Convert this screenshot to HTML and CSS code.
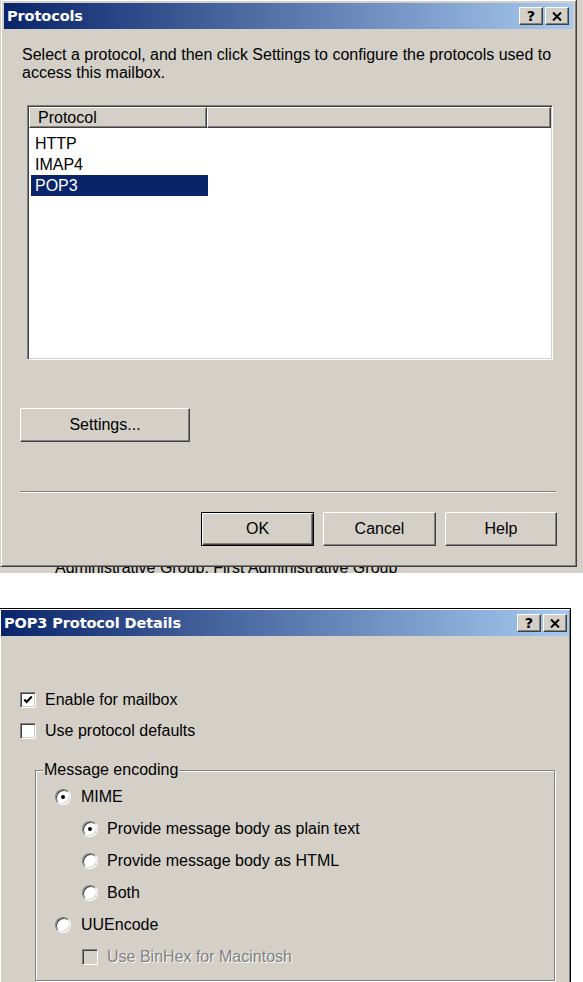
FILE: index.html
```html
<!DOCTYPE html>
<html>
<head>
<meta charset="utf-8">
<title>Protocols</title>
<link rel="stylesheet" href="styles.css">
</head>
<body>
<div class="backdrop">
  <div class="dialog dialog-main">
    <div class="titlebar">
      <span class="title">Protocols</span>
      <div class="tbtns">
        <span class="tbtn">?</span>
        <span class="tbtn"><svg width="10" height="9" viewBox="0 0 10 9"><path d="M1 0.5 L9 8.5 M9 0.5 L1 8.5" stroke="#000" stroke-width="2" fill="none"/></svg></span>
      </div>
    </div>
    <div class="body-main">
      <p class="intro">Select a protocol, and then click Settings to configure the protocols used to<br>access this mailbox.</p>
      <div class="listbox">
        <div class="lv-header">
          <div class="lv-col lv-col1">Protocol</div>
          <div class="lv-col lv-col2"></div>
        </div>
        <div class="lv-rows">
          <div class="lv-row">HTTP</div>
          <div class="lv-row">IMAP4</div>
          <div class="lv-row lv-sel">POP3</div>
        </div>
      </div>
      <div class="btn btn-settings">Settings...</div>
      <div class="sep"></div>
      <div class="btnrow">
        <div class="btn btn-default">OK</div>
        <div class="btn">Cancel</div>
        <div class="btn btn-help">Help</div>
      </div>
    </div>
  </div>
  <div class="behind-text">Administrative Group, First Administrative Group</div>
</div>

<div class="dialog dialog-details">
  <div class="titlebar titlebar-details">
    <span class="title">POP3 Protocol Details</span>
    <div class="tbtns">
      <span class="tbtn">?</span>
      <span class="tbtn"><svg width="10" height="9" viewBox="0 0 10 9"><path d="M1 0.5 L9 8.5 M9 0.5 L1 8.5" stroke="#000" stroke-width="2" fill="none"/></svg></span>
    </div>
  </div>
  <div class="body-details">
    <div class="check-row">
      <span class="checkbox"><svg width="12" height="12" viewBox="0 0 12 12"><path d="M2.2 5.4 L4.6 7.9 L9.8 2.6" stroke="#000" stroke-width="2.2" fill="none"/></svg></span>
      <span>Enable for mailbox</span>
    </div>
    <div class="check-row">
      <span class="checkbox"></span>
      <span>Use protocol defaults</span>
    </div>
    <div class="group">
      <div class="legend">Message encoding</div>
      <div class="opt opt-first"><span class="radio radio-on"></span><span>MIME</span></div>
      <div class="opt opt-sub"><span class="radio radio-on"></span><span>Provide message body as plain text</span></div>
      <div class="opt opt-sub"><span class="radio"></span><span>Provide message body as HTML</span></div>
      <div class="opt opt-sub"><span class="radio"></span><span>Both</span></div>
      <div class="opt"><span class="radio"></span><span>UUEncode</span></div>
      <div class="opt opt-sub opt-disabled"><span class="checkbox checkbox-disabled"></span><span class="dis-text">Use BinHex for Macintosh</span></div>
    </div>
  </div>
</div>
</body>
</html>
```

FILE: styles.css
```css
html, body {
  margin: 0;
  padding: 0;
  overflow: hidden;
}

body {
  width: 583px;
  height: 982px;
  background: #fff;
  font-family: "Liberation Sans", Arial, sans-serif;
  font-size: 16px;
  color: #000;
}

.backdrop {
  height: 573px;
  background: #d4d0c8;
  overflow: hidden;
}

.dialog {
  position: relative;
  z-index: 1;
  background: #d4d0c8;
  box-sizing: border-box;
}

.dialog-main {
  margin-top: -1px;
  width: 577px;
  padding: 3px;
  border: 1px solid;
  border-color: #d4d0c8 #404040 #404040 #d4d0c8;
  box-shadow: inset 1px 1px #fff, inset -1px -1px #808080;
}

.titlebar {
  height: 26px;
  display: flex;
  align-items: center;
  justify-content: space-between;
  padding: 0 4px 0 3px;
  background: linear-gradient(to right, #0a246a, #a6caf0);
}

.titlebar-details {
  padding-right: 2px;
}

.title {
  font-family: "DejaVu Sans", Verdana, sans-serif;
  font-weight: bold;
  font-size: 14.5px;
  color: #fff;
  letter-spacing: -0.1px;
}

.tbtns {
  display: flex;
  gap: 2px;
}

.tbtn {
  width: 24px;
  height: 18px;
  box-sizing: border-box;
  display: flex;
  align-items: center;
  justify-content: center;
  background: #d4d0c8;
  border: 1px solid;
  border-color: #fff #404040 #404040 #fff;
  box-shadow: inset -1px -1px #808080;
  font-family: "DejaVu Sans", Verdana, sans-serif;
  font-weight: bold;
  font-size: 14.5px;
  line-height: 16px;
  color: #000;
}

.body-main {
  padding: 0 16px 17px 16px;
}

.intro {
  margin: 17px 0 0 2px;
  line-height: 18px;
}

.listbox {
  margin: 23px 4px 0 7px;
  height: 255px;
  box-sizing: border-box;
  padding: 1px;
  background: #fff;
  border: 1px solid;
  border-color: #808080 #fff #fff #808080;
  box-shadow: inset 1px 1px #404040, inset -1px -1px #d4d0c8;
}

.lv-header {
  display: flex;
  height: 21px;
}

.lv-col {
  box-sizing: border-box;
  height: 21px;
  background: #d4d0c8;
  border: 1px solid;
  border-color: #fff #404040 #404040 #fff;
  box-shadow: inset -1px -1px #808080;
  line-height: 19px;
}

.lv-col1 {
  width: 178px;
  padding-left: 8px;
}

.lv-col2 {
  flex: 1;
}

.lv-rows {
  padding: 5px 0 0 2px;
}

.lv-row {
  width: 177px;
  height: 21px;
  line-height: 21px;
  padding-left: 4px;
  box-sizing: border-box;
}

.lv-sel {
  background: #0a246a;
  color: #fff;
}

.btn {
  box-sizing: border-box;
  height: 34px;
  width: 113px;
  display: flex;
  align-items: center;
  justify-content: center;
  background: #d4d0c8;
  border: 1px solid;
  border-color: #fff #404040 #404040 #fff;
  box-shadow: inset -1px -1px #808080;
}

.btn-settings {
  margin-top: 48px;
  width: 170px;
}

.btn-default {
  border-color: #000;
  box-shadow: inset 1px 1px #fff, inset -1px -1px #404040, inset -2px -2px #808080;
}

.btn-help {
  width: 112px;
}

.sep {
  margin-top: 49px;
  margin-right: 1px;
  border-top: 1px solid #808080;
  border-bottom: 1px solid #fff;
}

.btnrow {
  margin-top: 19px;
  display: flex;
  justify-content: flex-end;
  gap: 9px;
}

.behind-text {
  position: relative;
  z-index: 0;
  margin-top: -8px;
  padding-left: 55px;
  line-height: 18px;
}

.dialog-details {
  margin-top: 35px;
  margin-left: -1px;
  width: 572px;
  height: 420px;
  padding: 1px;
  border: 1px solid #000;
  box-shadow: inset 1px 1px #fff, inset -1px -1px #808080;
}

.body-details {
  padding: 48px 0 0 19px;
}

.check-row {
  display: flex;
  align-items: center;
  gap: 9px;
  height: 31px;
}

.checkbox {
  width: 16px;
  height: 16px;
  box-sizing: border-box;
  display: flex;
  align-items: center;
  justify-content: center;
  flex: none;
  background: #fff;
  border: 1px solid;
  border-color: #808080 #fff #fff #808080;
  box-shadow: inset 1px 1px #404040, inset -1px -1px #d4d0c8;
}

.checkbox-disabled {
  background: #d4d0c8;
}

.group {
  margin: 24px 0 0 15px;
  width: 520px;
  box-sizing: border-box;
  padding-bottom: 7px;
  border: 1px solid #808080;
  box-shadow: inset 1px 1px #fff, 1px 1px #fff;
}

.legend {
  width: fit-content;
  margin: -10px 0 0 7px;
  padding: 0 1px;
  line-height: 18px;
  background: #d4d0c8;
}

.opt {
  display: flex;
  align-items: center;
  gap: 10px;
  height: 32px;
  padding-left: 19px;
}

.opt-first {
  margin-top: 2px;
}

.opt-sub {
  padding-left: 46px;
  gap: 9px;
}

.radio {
  position: relative;
  width: 16px;
  height: 16px;
  box-sizing: border-box;
  flex: none;
  border-radius: 50%;
  background: #fff;
  border: 1px solid;
  border-color: #808080 #fff #fff #808080;
  box-shadow: inset 1px 1px #404040, inset -1px -1px #d4d0c8;
}

.radio-on::after {
  content: "";
  position: absolute;
  left: 5px;
  top: 5px;
  width: 4px;
  height: 4px;
  border-radius: 50%;
  background: #000;
}

.dis-text {
  color: #808080;
  text-shadow: 1px 1px #fff;
}
```
